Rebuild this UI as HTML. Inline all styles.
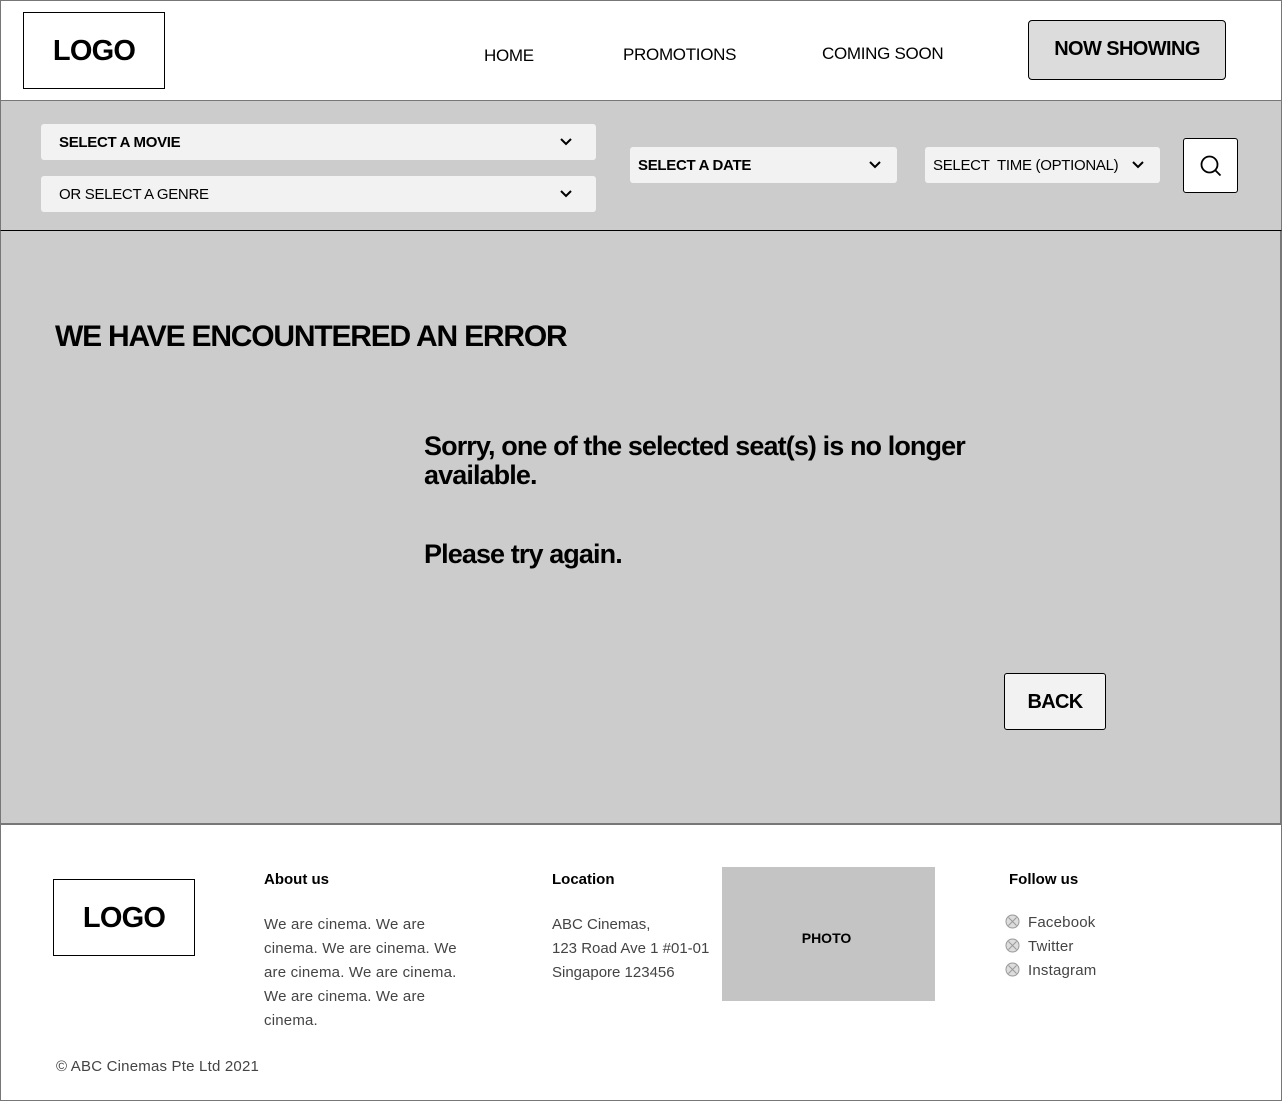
<!DOCTYPE html>
<html><head><meta charset="utf-8"><style>
*{margin:0;padding:0;box-sizing:border-box}
body{width:1282px;height:1101px;position:relative;background:#fff;font-family:"Liberation Sans",Arial,sans-serif;color:#000;overflow:hidden}
.a{position:absolute;white-space:nowrap}
.box{position:absolute;border:1px solid #000}
.sel{position:absolute;background:#f2f2f2;border-radius:3px;font-size:15px;letter-spacing:-0.3px;padding-left:18px;display:flex;align-items:center}
.chev{position:absolute;top:50%;margin-top:-5px}
.ft{font-size:15px;color:#444;letter-spacing:0.2px}
</style></head><body>
<div class="box" style="left:0;top:0;width:1282px;height:101px;border-color:#777"></div>
<div class="box" style="left:23px;top:12px;width:142px;height:77px;display:flex;align-items:center;justify-content:center;font-weight:bold;font-size:29px;letter-spacing:-0.8px;padding-top:2px">LOGO</div>
<div class="a" style="left:484px;top:46px;font-size:17px;letter-spacing:-0.3px">HOME</div>
<div class="a" style="left:623px;top:45px;font-size:17px;letter-spacing:-0.3px">PROMOTIONS</div>
<div class="a" style="left:822px;top:44px;font-size:17px;letter-spacing:-0.3px">COMING SOON</div>
<div class="box" style="left:1028px;top:20px;width:198px;height:60px;background:#dcdcdc;border-radius:4px;display:flex;align-items:center;justify-content:center;font-weight:bold;font-size:20px;letter-spacing:-0.6px;padding-bottom:2px">NOW SHOWING</div>
<div style="position:absolute;left:0;top:100px;width:1282px;height:131px;background:#cccccc;border-left:1px solid #777;border-right:1px solid #777;border-bottom:1px solid #000;border-top:1px solid #777"></div>
<div class="sel" style="left:41px;top:124px;width:555px;height:36px;font-weight:bold">SELECT A MOVIE<svg class="chev" style="right:24px" width="12" height="9" viewBox="0 0 12 9"><path d="M1 2l5 5 5-5" fill="none" stroke="#000" stroke-width="2"/></svg></div>
<div class="sel" style="left:41px;top:176px;width:555px;height:36px">OR SELECT A GENRE<svg class="chev" style="right:24px" width="12" height="9" viewBox="0 0 12 9"><path d="M1 2l5 5 5-5" fill="none" stroke="#000" stroke-width="2"/></svg></div>
<div class="sel" style="left:630px;top:147px;width:267px;height:36px;font-weight:bold;padding-left:8px">SELECT A DATE<svg class="chev" style="right:16px" width="12" height="9" viewBox="0 0 12 9"><path d="M1 2l5 5 5-5" fill="none" stroke="#000" stroke-width="2"/></svg></div>
<div class="sel" style="left:925px;top:147px;width:235px;height:36px;padding-left:8px">SELECT&nbsp; TIME (OPTIONAL)<svg class="chev" style="right:16px" width="12" height="9" viewBox="0 0 12 9"><path d="M1 2l5 5 5-5" fill="none" stroke="#000" stroke-width="2"/></svg></div>
<div class="box" style="left:1183px;top:138px;width:55px;height:55px;background:#fff;border-radius:3px"><svg style="position:absolute;left:16px;top:16px" width="22" height="22" viewBox="0 0 22 22"><circle cx="9.5" cy="9.5" r="8" fill="none" stroke="#000" stroke-width="1.8"/><path d="M15.5 15.5l5 5" stroke="#000" stroke-width="1.8"/></svg></div>
<div style="position:absolute;left:0;top:231px;width:1282px;height:594px;background:#cccccc;border-left:1px solid #777;border-right:2px solid #777;border-bottom:2px solid #777"></div>
<div class="a" style="left:55px;top:320px;font-weight:bold;font-size:30px;letter-spacing:-1.2px">WE HAVE ENCOUNTERED AN ERROR</div>
<div class="a" style="left:424px;top:432px;font-weight:bold;font-size:27px;letter-spacing:-0.9px;line-height:29px">Sorry, one of the selected seat(s) is no longer<br>available.</div>
<div class="a" style="left:424px;top:539px;font-weight:bold;font-size:27px;letter-spacing:-0.9px">Please try again.</div>
<div class="box" style="left:1004px;top:673px;width:102px;height:57px;background:#f2f2f2;border-radius:3px;display:flex;align-items:center;justify-content:center;font-weight:bold;font-size:20px;letter-spacing:-0.7px;padding-top:2px">BACK</div>
<div style="position:absolute;left:0;top:825px;width:1282px;height:276px;border:1px solid #777;border-top:none"></div>
<div class="box" style="left:53px;top:879px;width:142px;height:77px;display:flex;align-items:center;justify-content:center;font-weight:bold;font-size:29px;letter-spacing:-0.8px;padding-top:2px">LOGO</div>
<div class="a" style="left:264px;top:871px;font-weight:bold;font-size:15px">About us</div>
<div class="a ft" style="left:264px;top:913px;line-height:24px">We are cinema. We are<br>cinema. We are cinema. We<br>are cinema. We are cinema.<br>We are cinema. We are<br>cinema.</div>
<div class="a" style="left:552px;top:871px;font-weight:bold;font-size:15px">Location</div>
<div class="a ft" style="left:552px;top:913px;line-height:24px;letter-spacing:0">ABC Cinemas,<br>123 Road Ave 1 #01-01<br>Singapore 123456</div>
<div style="position:absolute;left:722px;top:867px;width:213px;height:134px;background:#c4c4c4;display:flex;align-items:center;justify-content:center;font-weight:bold;font-size:14px;padding-right:4px;padding-top:8px">PHOTO</div>
<div class="a" style="left:1009px;top:871px;font-weight:bold;font-size:15px">Follow us</div>
<div class="a ft" style="left:1005px;top:911px;line-height:24px">
<div><svg width="15" height="15" viewBox="0 0 15 15" style="vertical-align:-2px;margin-right:8px"><circle cx="7.5" cy="7.5" r="6.5" fill="#ddd" stroke="#999"/><path d="M3.5 3.5l8 8M11.5 3.5l-8 8" stroke="#999"/></svg>Facebook</div>
<div><svg width="15" height="15" viewBox="0 0 15 15" style="vertical-align:-2px;margin-right:8px"><circle cx="7.5" cy="7.5" r="6.5" fill="#ddd" stroke="#999"/><path d="M3.5 3.5l8 8M11.5 3.5l-8 8" stroke="#999"/></svg>Twitter</div>
<div><svg width="15" height="15" viewBox="0 0 15 15" style="vertical-align:-2px;margin-right:8px"><circle cx="7.5" cy="7.5" r="6.5" fill="#ddd" stroke="#999"/><path d="M3.5 3.5l8 8M11.5 3.5l-8 8" stroke="#999"/></svg>Instagram</div>
</div>
<div class="a ft" style="left:56px;top:1058px">© ABC Cinemas Pte Ltd 2021</div>
</body></html>
